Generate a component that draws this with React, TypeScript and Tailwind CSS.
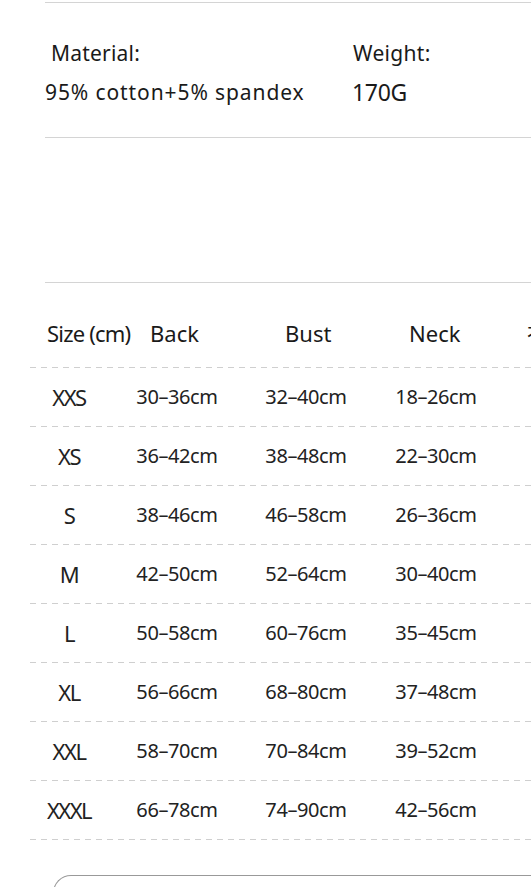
import React from 'react';

const rows = [
  ['XXS', '30–36cm', '32–40cm', '18–26cm'],
  ['XS', '36–42cm', '38–48cm', '22–30cm'],
  ['S', '38–46cm', '46–58cm', '26–36cm'],
  ['M', '42–50cm', '52–64cm', '30–40cm'],
  ['L', '50–58cm', '60–76cm', '35–45cm'],
  ['XL', '56–66cm', '68–80cm', '37–48cm'],
  ['XXL', '58–70cm', '70–84cm', '39–52cm'],
  ['XXXL', '66–78cm', '74–90cm', '42–56cm'],
];

const Dashed = () => (
  <div className="h-px ml-[30px] bg-[repeating-linear-gradient(90deg,#cfcfcf_0_6px,transparent_6px_11px)]" />
);

const App: React.FC = () => {
  return (
    <div className="w-[531px] h-[887px] overflow-hidden bg-white text-[#1a1a1a] font-['Noto_Sans','Noto_Sans_CJK_SC',sans-serif]">
      {/* material / weight */}
      <div className="mt-[2px] ml-[45px] border-t border-[#d4d4d4]" />
      <div className="h-[134px] flex pt-[32px]">
        <div className="w-[352px] shrink-0 pl-[45px]">
          <div className="pl-[6px] text-[21px] leading-[36px] tracking-[0.2px]">Material:</div>
          <div className="text-[21px] leading-[36px] mt-[3px] tracking-[0.9px]">95% cotton+5% spandex</div>
        </div>
        <div>
          <div className="pl-[1px] text-[21px] leading-[36px] tracking-[0.3px]">Weight:</div>
          <div className="text-[23px] leading-[36px] mt-[3px] tracking-[-0.3px]">170G</div>
        </div>
      </div>
      <div className="ml-[45px] border-t border-[#d4d4d4]" />

      <div className="h-[144px]" />
      <div className="ml-[45px] border-t border-[#d4d4d4]" />

      {/* size table */}
      <div className="h-[84px] flex items-center pt-[16px] pl-[47px] text-[22px] whitespace-nowrap">
        <div className="w-[103px] shrink-0 tracking-[-0.8px]">Size (cm)</div>
        <div className="w-[135px] shrink-0">Back</div>
        <div className="w-[124px] shrink-0">Bust</div>
        <div className="w-[118px] shrink-0">Neck</div>
        <div className="shrink-0">衣长</div>
      </div>
      <Dashed />
      {rows.map((r) => (
        <React.Fragment key={r[0]}>
          <div className="h-[58px] flex items-center pl-[30px] text-[20px] tracking-[-0.4px] text-[#222]">
            <div className="w-[78px] shrink-0 text-center text-[22px] tracking-[-1.5px]">{r[0]}</div>
            <div className="w-[138px] shrink-0 text-center">{r[1]}</div>
            <div className="w-[120px] shrink-0 text-center">{r[2]}</div>
            <div className="w-[140px] shrink-0 text-center">{r[3]}</div>
          </div>
          <Dashed />
        </React.Fragment>
      ))}

      {/* next block */}
      <div className="mt-[35px] ml-[53px] h-[40px] border-t border-l border-[#999] rounded-tl-[18px]" />
    </div>
  );
};

export default App;
